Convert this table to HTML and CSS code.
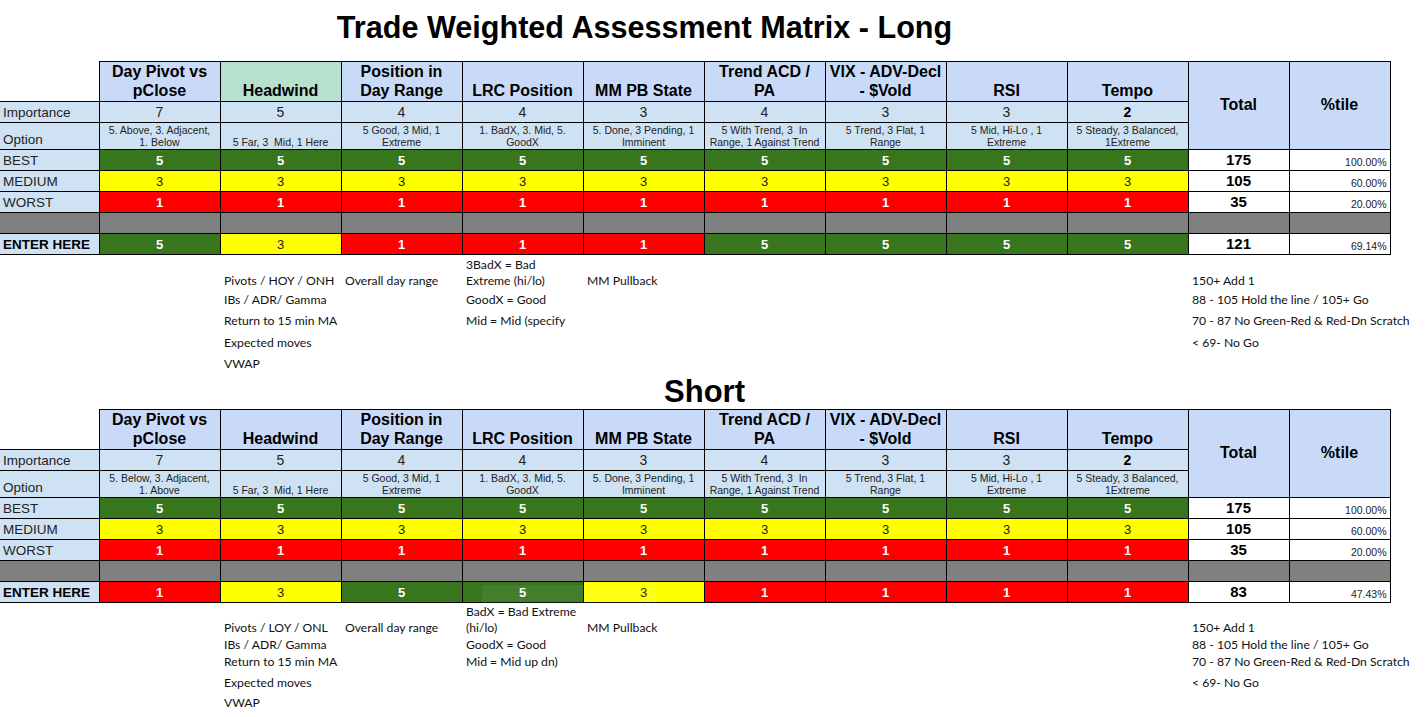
FILE: index.html
```html
<!DOCTYPE html>
<html>
<head>
<meta charset="utf-8">
<link rel="stylesheet" href="styles.css">
</head>
<body>
<h1 class="title">Trade Weighted Assessment Matrix - Long</h1>
<table class="matrix">
<colgroup><col class="w-lbl"><col class="w-d"><col class="w-d"><col class="w-d"><col class="w-d"><col class="w-d"><col class="w-d"><col class="w-d"><col class="w-d"><col class="w-d"><col class="w-t"><col class="w-t"></colgroup>
<tr class="r-head">
<td class="corner"></td>
<td class="hd">Day Pivot vs<br>pClose</td>
<td class="hd hd-green">Headwind</td>
<td class="hd">Position in<br>Day Range</td>
<td class="hd">LRC Position</td>
<td class="hd">MM PB State</td>
<td class="hd">Trend ACD /<br>PA</td>
<td class="hd">VIX - ADV-Decl<br>- $Vold</td>
<td class="hd">RSI</td>
<td class="hd">Tempo</td>
<td class="tot" rowspan="3">Total</td>
<td class="tot" rowspan="3">%tile</td>
</tr>
<tr class="r-imp">
<td class="lbl">Importance</td>
<td class="imp">7</td><td class="imp">5</td><td class="imp">4</td><td class="imp">4</td><td class="imp">3</td><td class="imp">4</td><td class="imp">3</td><td class="imp">3</td><td class="imp imp-b">2</td>
</tr>
<tr class="r-opt">
<td class="lbl">Option</td>
<td class="opt">5. Above, 3. Adjacent,<br>1. Below</td>
<td class="opt">5 Far, 3 &nbsp;Mid, 1 Here</td>
<td class="opt">5 Good, 3 Mid, 1<br>Extreme</td>
<td class="opt">1. BadX, 3. Mid, 5.<br>GoodX</td>
<td class="opt">5. Done, 3 Pending, 1<br>Imminent</td>
<td class="opt">5 With Trend, 3 &nbsp;In<br>Range, 1 Against Trend</td>
<td class="opt">5 Trend, 3 Flat, 1<br>Range</td>
<td class="opt">5 Mid, Hi-Lo , 1<br>Extreme</td>
<td class="opt">5 Steady, 3 Balanced,<br>1Extreme</td>
</tr>
<tr class="r-val">
<td class="lbl">BEST</td>
<td class="v g">5</td><td class="v g">5</td><td class="v g">5</td><td class="v g">5</td><td class="v g">5</td><td class="v g">5</td><td class="v g">5</td><td class="v g">5</td><td class="v g">5</td>
<td class="sum">175</td><td class="pct">100.00%</td>
</tr>
<tr class="r-val">
<td class="lbl">MEDIUM</td>
<td class="v y">3</td><td class="v y">3</td><td class="v y">3</td><td class="v y">3</td><td class="v y">3</td><td class="v y">3</td><td class="v y">3</td><td class="v y">3</td><td class="v y">3</td>
<td class="sum">105</td><td class="pct">60.00%</td>
</tr>
<tr class="r-val">
<td class="lbl">WORST</td>
<td class="v r">1</td><td class="v r">1</td><td class="v r">1</td><td class="v r">1</td><td class="v r">1</td><td class="v r">1</td><td class="v r">1</td><td class="v r">1</td><td class="v r">1</td>
<td class="sum">35</td><td class="pct">20.00%</td>
</tr>
<tr class="r-val">
<td class="lbl gray"></td>
<td class="gray"></td><td class="gray"></td><td class="gray"></td><td class="gray"></td><td class="gray"></td><td class="gray"></td><td class="gray"></td><td class="gray"></td><td class="gray"></td><td class="gray"></td><td class="gray"></td>
</tr>
<tr class="r-val">
<td class="lbl lbl-b">ENTER HERE</td>
<td class="v g">5</td><td class="v y">3</td><td class="v r">1</td><td class="v r">1</td><td class="v r">1</td><td class="v g">5</td><td class="v g">5</td><td class="v g">5</td><td class="v g">5</td>
<td class="sum">121</td><td class="pct">69.14%</td>
</tr>
</table>

<div class="notes notes-long">
<div class="n c3 row1">Pivots / HOY / ONH</div>
<div class="n c3 row2">IBs / ADR/ Gamma</div>
<div class="n c3 row3">Return to 15 min MA</div>
<div class="n c3 row4">Expected moves</div>
<div class="n c3 row5">VWAP</div>
<div class="n c4 row1">Overall day range</div>
<div class="n c5 row1">3BadX = Bad<br>Extreme (hi/lo)</div>
<div class="n c5 row2">GoodX = Good</div>
<div class="n c5 row3">Mid = Mid (specify</div>
<div class="n c6 row1">MM Pullback</div>
<div class="n c11 row1">150+ Add 1</div>
<div class="n c11 row2">88 - 105 Hold the line / 105+ Go</div>
<div class="n c11 row3">70 - 87 No Green-Red &amp; Red-Dn Scratch</div>
<div class="n c11 row4">&lt; 69- No Go</div>
</div>

<h2 class="subtitle">Short</h2>
<table class="matrix">
<colgroup><col class="w-lbl"><col class="w-d"><col class="w-d"><col class="w-d"><col class="w-d"><col class="w-d"><col class="w-d"><col class="w-d"><col class="w-d"><col class="w-d"><col class="w-t"><col class="w-t"></colgroup>
<tr class="r-head">
<td class="corner"></td>
<td class="hd">Day Pivot vs<br>pClose</td>
<td class="hd">Headwind</td>
<td class="hd">Position in<br>Day Range</td>
<td class="hd">LRC Position</td>
<td class="hd">MM PB State</td>
<td class="hd">Trend ACD /<br>PA</td>
<td class="hd">VIX - ADV-Decl<br>- $Vold</td>
<td class="hd">RSI</td>
<td class="hd">Tempo</td>
<td class="tot" rowspan="3">Total</td>
<td class="tot" rowspan="3">%tile</td>
</tr>
<tr class="r-imp">
<td class="lbl">Importance</td>
<td class="imp">7</td><td class="imp">5</td><td class="imp">4</td><td class="imp">4</td><td class="imp">3</td><td class="imp">4</td><td class="imp">3</td><td class="imp">3</td><td class="imp imp-b">2</td>
</tr>
<tr class="r-opt">
<td class="lbl">Option</td>
<td class="opt">5. Below, 3. Adjacent,<br>1. Above</td>
<td class="opt">5 Far, 3 &nbsp;Mid, 1 Here</td>
<td class="opt">5 Good, 3 Mid, 1<br>Extreme</td>
<td class="opt">1. BadX, 3. Mid, 5.<br>GoodX</td>
<td class="opt">5. Done, 3 Pending, 1<br>Imminent</td>
<td class="opt">5 With Trend, 3 &nbsp;In<br>Range, 1 Against Trend</td>
<td class="opt">5 Trend, 3 Flat, 1<br>Range</td>
<td class="opt">5 Mid, Hi-Lo , 1<br>Extreme</td>
<td class="opt">5 Steady, 3 Balanced,<br>1Extreme</td>
</tr>
<tr class="r-val">
<td class="lbl">BEST</td>
<td class="v g">5</td><td class="v g">5</td><td class="v g">5</td><td class="v g">5</td><td class="v g">5</td><td class="v g">5</td><td class="v g">5</td><td class="v g">5</td><td class="v g">5</td>
<td class="sum">175</td><td class="pct">100.00%</td>
</tr>
<tr class="r-val">
<td class="lbl">MEDIUM</td>
<td class="v y">3</td><td class="v y">3</td><td class="v y">3</td><td class="v y">3</td><td class="v y">3</td><td class="v y">3</td><td class="v y">3</td><td class="v y">3</td><td class="v y">3</td>
<td class="sum">105</td><td class="pct">60.00%</td>
</tr>
<tr class="r-val">
<td class="lbl">WORST</td>
<td class="v r">1</td><td class="v r">1</td><td class="v r">1</td><td class="v r">1</td><td class="v r">1</td><td class="v r">1</td><td class="v r">1</td><td class="v r">1</td><td class="v r">1</td>
<td class="sum">35</td><td class="pct">20.00%</td>
</tr>
<tr class="r-val">
<td class="lbl gray"></td>
<td class="gray"></td><td class="gray"></td><td class="gray"></td><td class="gray"></td><td class="gray"></td><td class="gray"></td><td class="gray"></td><td class="gray"></td><td class="gray"></td><td class="gray"></td><td class="gray"></td>
</tr>
<tr class="r-val">
<td class="lbl lbl-b">ENTER HERE</td>
<td class="v r">1</td><td class="v y">3</td><td class="v g">5</td><td class="v g">5</td><td class="v y">3</td><td class="v r">1</td><td class="v r">1</td><td class="v r">1</td><td class="v r">1</td>
<td class="sum">83</td><td class="pct">47.43%</td>
</tr>
</table>

<div class="notes notes-short">
<div class="n c3 row1">Pivots / LOY / ONL</div>
<div class="n c3 row2">IBs / ADR/ Gamma</div>
<div class="n c3 row3">Return to 15 min MA</div>
<div class="n c3 row4">Expected moves</div>
<div class="n c3 row5">VWAP</div>
<div class="n c4 row1">Overall day range</div>
<div class="n c5 row1">BadX = Bad Extreme<br>(hi/lo)</div>
<div class="n c5 row2">GoodX = Good</div>
<div class="n c5 row3">Mid = Mid up dn)</div>
<div class="n c6 row1">MM Pullback</div>
<div class="n c11 row1">150+ Add 1</div>
<div class="n c11 row2">88 - 105 Hold the line / 105+ Go</div>
<div class="n c11 row3">70 - 87 No Green-Red &amp; Red-Dn Scratch</div>
<div class="n c11 row4">&lt; 69- No Go</div>
</div>

<div class="snip"></div>
</body>
</html>
```
FILE: styles.css
```css
* { box-sizing: border-box; }
body {
  margin: 0;
  background: #fff;
  color: #000;
  font-family: "Liberation Sans", Arial, sans-serif;
  position: relative;
}
.title {
  margin: 0;
  width: 1289px;
  height: 61px;
  padding-top: 10px;
  text-align: center;
  font-size: 30.6px;
  line-height: 35px;
  font-weight: bold;
}
.subtitle {
  margin: 0;
  width: 1409px;
  height: 35px;
  text-align: center;
  font-size: 31px;
  line-height: 35px;
  font-weight: bold;
}
.matrix {
  border-collapse: collapse;
  table-layout: fixed;
  width: 1390px;
}
.w-lbl { width: 99px; }
.w-d { width: 121px; }
.w-t { width: 101px; }
.matrix td {
  border: 1px solid #000;
  padding: 0 3px 1px;
  text-align: center;
  vertical-align: bottom;
  white-space: nowrap;
  overflow: hidden;
}
.r-head { height: 40px; }
.r-imp { height: 21px; }
.r-opt { height: 27px; }
.r-val { height: 21px; }
.matrix td.corner {
  border-top: none;
  border-left: none;
  background: #fff;
}
.matrix td.hd {
  background: #c9daf8;
  font-size: 16px;
  line-height: 19px;
  font-weight: bold;
  white-space: normal;
}
.matrix td.hd-green { background: #b7e1cd; }
.matrix td.tot {
  background: #c9daf8;
  font-size: 16px;
  font-weight: bold;
  vertical-align: middle;
}
.matrix td.lbl {
  border-left: none;
  background: #cfe2f3;
  text-align: left;
  font-size: 13.5px;
  line-height: 17px;
  color: #222;
}
.matrix td.lbl-b { font-weight: bold; color: #000; }
.matrix td.imp {
  background: #cfe2f3;
  font-size: 14px;
  line-height: 17px;
  color: #222;
}
.matrix td.imp-b { font-weight: bold; color: #000; }
.matrix td.opt {
  background: #cfe2f3;
  font-size: 10.5px;
  line-height: 12px;
  color: #222;
}
.matrix td.v {
  font-size: 13px;
  line-height: 17px;
  font-weight: bold;
  color: #fff;
}
.matrix td.g { background: #38761d; }
.matrix td.r { background: #ff0000; }
.matrix td.y {
  background: #ffff00;
  color: #222;
  font-weight: normal;
}
.matrix td.gray { background: #808080; }
.matrix td.sum {
  background: #fff;
  font-size: 15px;
  line-height: 18px;
  font-weight: bold;
}
.matrix td.pct {
  background: #fff;
  text-align: right;
  font-size: 10.5px;
  line-height: 14px;
  color: #222;
}
.notes {
  display: grid;
  grid-template-columns: 99px repeat(9, 121px) 101px 101px;
  font-family: Lato, "Open Sans", sans-serif;
  font-size: 12.2px;
  color: #111;
}
.notes-long { grid-template-rows: 36px 19px 21px 22px 21px; }
.notes-short { grid-template-rows: 35px 17px 17px 21px 20px; }
.n {
  align-self: end;
  line-height: 16px;
  padding: 0 0 2px 4px;
  white-space: nowrap;
}
.c3 { grid-column: 3; }
.c4 { grid-column: 4; }
.c5 { grid-column: 5; }
.c6 { grid-column: 6; }
.c11 { grid-column: 11; }
.row1 { grid-row: 1; }
.row2 { grid-row: 2; }
.row3 { grid-row: 3; }
.row4 { grid-row: 4; }
.row5 { grid-row: 5; }
.snip {
  position: absolute;
  left: 482px;
  top: 585px;
  width: 176px;
  height: 22px;
  background: rgba(225, 240, 248, 0.07);
}
```
